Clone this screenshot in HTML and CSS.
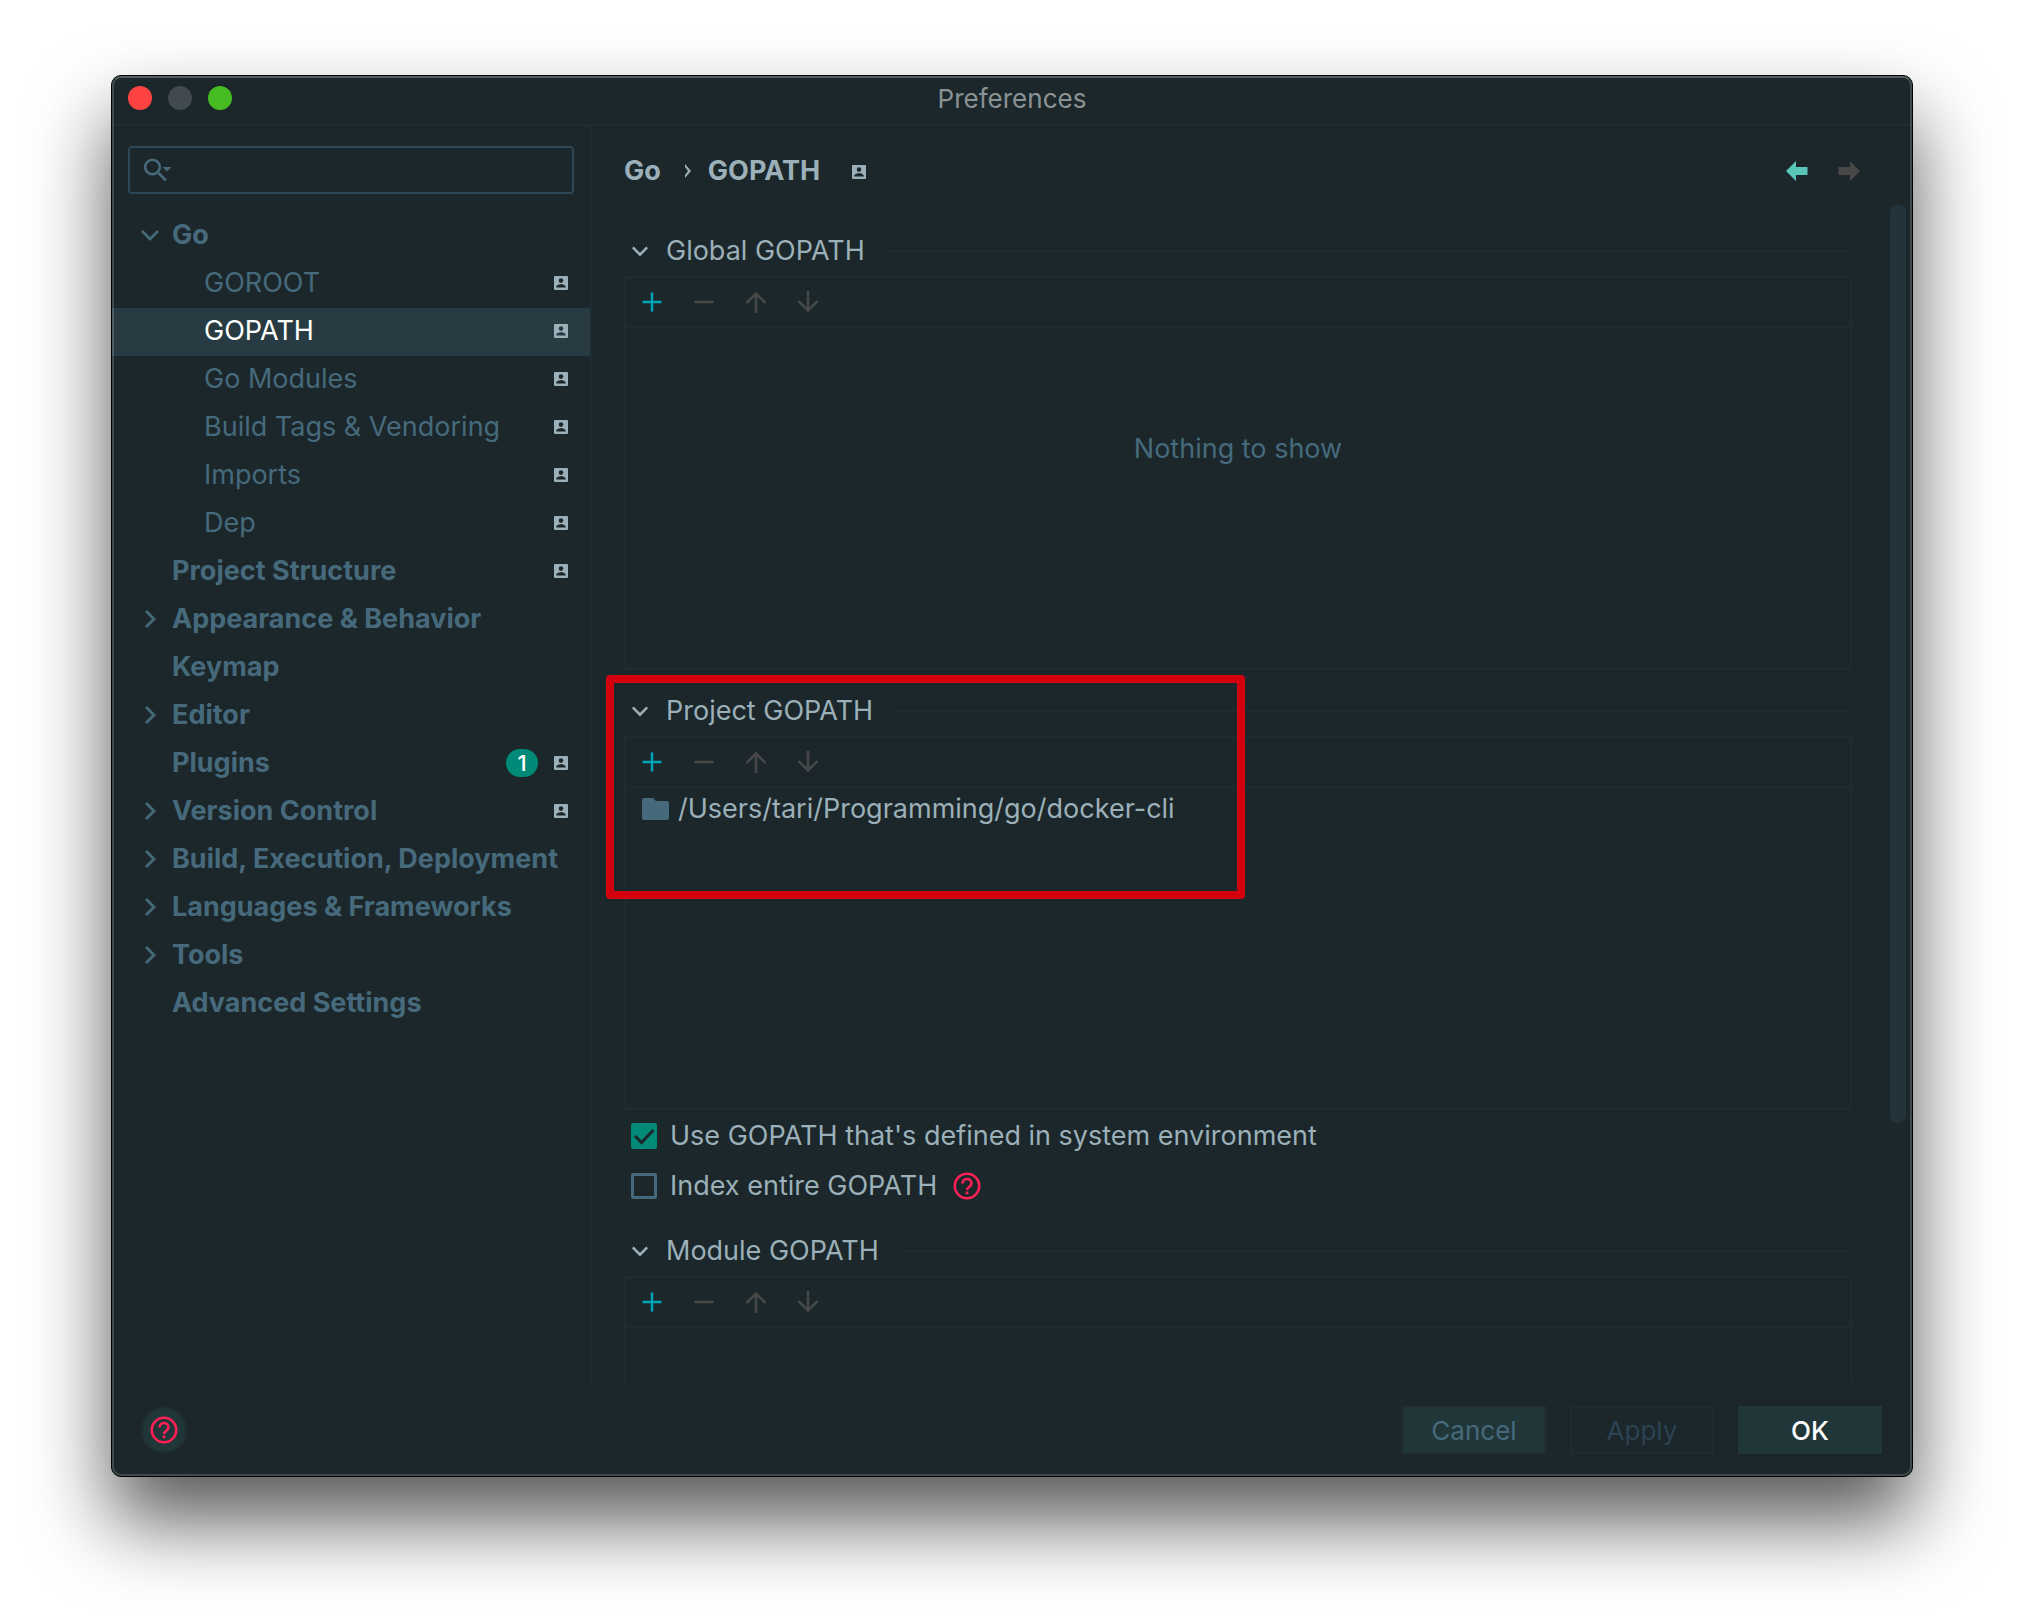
FILE: index.html
```html
<!DOCTYPE html>
<html lang="en">
<head>
<meta charset="utf-8">
<title>Preferences</title>
<link rel="stylesheet" href="styles.css">
</head>
<body>
<svg class="sprite" aria-hidden="true">
  <symbol id="badge" viewBox="0 0 14 14"><path fill="currentColor" fill-rule="evenodd" d="M1 0h12a1 1 0 0 1 1 1v12a1 1 0 0 1-1 1H1a1 1 0 0 1-1-1V1a1 1 0 0 1 1-1zM7 2.300a2.300 2.300 0 1 0 0 4.600a2.300 2.300 0 1 0 0-4.600zM2.300 11.500h9.400v-.8c0-1.700-3-2.500-4.700-2.500s-4.700.8-4.700 2.500z"/></symbol>
  <symbol id="down" viewBox="0 0 20 20"><path d="M2 6l8 8 8-8" fill="none" stroke="currentColor" stroke-width="2.800"/></symbol>
  <symbol id="right" viewBox="0 0 20 20"><path d="M6 2l8 8-8 8" fill="none" stroke="currentColor" stroke-width="2.800"/></symbol>
  <symbol id="add" viewBox="0 0 24 24"><path d="M12 2.500v19M2.500 12h19" fill="none" stroke="currentColor" stroke-width="2.500"/></symbol>
  <symbol id="remove" viewBox="0 0 24 24"><path d="M2.500 12h19" fill="none" stroke="currentColor" stroke-width="2.500"/></symbol>
  <symbol id="up" viewBox="0 0 24 24"><path d="M12 23V4M2.500 13L12 3.500l9.500 9.500" fill="none" stroke="currentColor" stroke-width="2.500"/></symbol>
  <symbol id="dn" viewBox="0 0 24 24"><path d="M12 1v19M2.500 11l9.500 9.500 9.500-9.500" fill="none" stroke="currentColor" stroke-width="2.500"/></symbol>
  <symbol id="help" viewBox="0 0 28 28"><g fill="none" stroke="currentColor"><circle cx="14" cy="14" r="12.200" stroke-width="2.600"/><path d="M9.500 11.500c0-6 9-6 9 0 0 3.300-4.400 3.200-4.400 6.500" stroke-width="2.600"/></g><path d="M12.700 19.500h2.700v2.700h-2.700z" fill="currentColor"/></symbol>
</svg>

<div class="window">
  <header class="titlebar">
    <div class="lights">
      <button class="light light-close" aria-label="Close"></button>
      <button class="light" aria-label="Minimize" disabled></button>
      <button class="light light-zoom" aria-label="Zoom"></button>
    </div>
    <h1 class="title">Preferences</h1>
  </header>

  <div class="body">
    <nav class="sidebar">
      <label class="search">
        <svg class="search-icon" width="28" height="24" viewBox="0 0 28 24" aria-hidden="true"><g fill="none" stroke="currentColor" stroke-width="2.600"><circle cx="8.500" cy="9" r="7.300"/><path d="M14.500 15l7.500 7.500"/></g><path d="M18.500 9h9L23 13.500z" fill="currentColor"/></svg>
        <input class="search-input" type="text" aria-label="Search settings">
      </label>
      <ul class="tree">
        <li class="row group"><svg class="chev"><use href="#down"/></svg><a class="name" href="#">Go</a></li>
        <li class="row child"><a class="name" href="#">GOROOT</a><svg class="badge"><use href="#badge"/></svg></li>
        <li class="row child selected"><a class="name" href="#">GOPATH</a><svg class="badge"><use href="#badge"/></svg></li>
        <li class="row child"><a class="name" href="#">Go Modules</a><svg class="badge"><use href="#badge"/></svg></li>
        <li class="row child"><a class="name" href="#">Build Tags &amp; Vendoring</a><svg class="badge"><use href="#badge"/></svg></li>
        <li class="row child"><a class="name" href="#">Imports</a><svg class="badge"><use href="#badge"/></svg></li>
        <li class="row child"><a class="name" href="#">Dep</a><svg class="badge"><use href="#badge"/></svg></li>
        <li class="row group leaf"><a class="name" href="#">Project Structure</a><svg class="badge"><use href="#badge"/></svg></li>
        <li class="row group"><svg class="chev"><use href="#right"/></svg><a class="name" href="#">Appearance &amp; Behavior</a></li>
        <li class="row group leaf"><a class="name" href="#">Keymap</a></li>
        <li class="row group"><svg class="chev"><use href="#right"/></svg><a class="name" href="#">Editor</a></li>
        <li class="row group leaf"><a class="name" href="#">Plugins</a><span class="count">1</span><svg class="badge"><use href="#badge"/></svg></li>
        <li class="row group"><svg class="chev"><use href="#right"/></svg><a class="name" href="#">Version Control</a><svg class="badge"><use href="#badge"/></svg></li>
        <li class="row group"><svg class="chev"><use href="#right"/></svg><a class="name" href="#">Build, Execution, Deployment</a></li>
        <li class="row group"><svg class="chev"><use href="#right"/></svg><a class="name" href="#">Languages &amp; Frameworks</a></li>
        <li class="row group"><svg class="chev"><use href="#right"/></svg><a class="name" href="#">Tools</a></li>
        <li class="row group leaf"><a class="name" href="#">Advanced Settings</a></li>
      </ul>
    </nav>

    <main class="main">
      <div class="crumbs">
        <a class="crumb" href="#">Go</a>
        <svg class="crumb-sep" width="8" height="14" viewBox="0 0 8 14" aria-hidden="true"><path d="M1 0l6 7-6 7V11l3-4-3-4z" fill="currentColor"/></svg>
        <h2 class="crumb">GOPATH</h2>
        <svg class="crumb-badge"><use href="#badge"/></svg>
        <div class="history">
          <button class="nav nav-back" aria-label="Back"><svg width="22" height="20" viewBox="0 0 22 20"><path d="M0 10L10 0v6h11.500v8H10v6z" fill="currentColor"/></svg></button>
          <button class="nav" aria-label="Forward" disabled><svg width="22" height="20" viewBox="0 0 22 20"><path d="M22 10L12 0v6H.5v8H12v6z" fill="currentColor"/></svg></button>
        </div>
      </div>

      <div class="viewport">
        <div class="content">
          <section class="section">
            <h3 class="heading"><svg class="chev"><use href="#down"/></svg>Global GOPATH</h3>
            <div class="panel panel-tall">
              <div class="toolbar">
                <button class="tool tool-add" aria-label="Add"><svg><use href="#add"/></svg></button>
                <button class="tool" aria-label="Remove" disabled><svg><use href="#remove"/></svg></button>
                <button class="tool" aria-label="Move up" disabled><svg><use href="#up"/></svg></button>
                <button class="tool" aria-label="Move down" disabled><svg><use href="#dn"/></svg></button>
              </div>
              <p class="empty">Nothing to show</p>
            </div>
          </section>

          <section class="section">
            <div class="highlight"></div>
            <h3 class="heading"><svg class="chev"><use href="#down"/></svg>Project GOPATH</h3>
            <div class="panel">
              <div class="toolbar">
                <button class="tool tool-add" aria-label="Add"><svg><use href="#add"/></svg></button>
                <button class="tool" aria-label="Remove" disabled><svg><use href="#remove"/></svg></button>
                <button class="tool" aria-label="Move up" disabled><svg><use href="#up"/></svg></button>
                <button class="tool" aria-label="Move down" disabled><svg><use href="#dn"/></svg></button>
              </div>
              <ul class="paths">
                <li class="path"><svg class="folder" width="28" height="22" viewBox="0 0 28 22" aria-hidden="true"><path d="M2 0h9l3 3h11a2 2 0 0 1 2 2v15a2 2 0 0 1-2 2H2a2 2 0 0 1-2-2V2a2 2 0 0 1 2-2z" fill="currentColor"/></svg>/Users/tari/Programming/go/docker-cli</li>
              </ul>
            </div>
            <div class="options">
              <label class="option"><span class="check"><input class="box" type="checkbox" checked><svg class="tick" width="26" height="26" viewBox="0 0 26 26" aria-hidden="true"><path d="M4 13l6.500 6.500L22.500 7" fill="none" stroke="currentColor" stroke-width="3"/></svg></span>Use GOPATH that's defined in system environment</label>
              <div class="option"><label class="option"><span class="check"><input class="box" type="checkbox"></span>Index entire GOPATH</label><svg class="help"><use href="#help"/></svg></div>
            </div>
          </section>

          <section class="section section-last">
            <h3 class="heading"><svg class="chev"><use href="#down"/></svg>Module GOPATH</h3>
            <div class="panel panel-tall">
              <div class="toolbar">
                <button class="tool tool-add" aria-label="Add"><svg><use href="#add"/></svg></button>
                <button class="tool" aria-label="Remove" disabled><svg><use href="#remove"/></svg></button>
                <button class="tool" aria-label="Move up" disabled><svg><use href="#up"/></svg></button>
                <button class="tool" aria-label="Move down" disabled><svg><use href="#dn"/></svg></button>
              </div>
            </div>
          </section>
        </div>
        <div class="scrollbar"><div class="thumb"></div></div>
      </div>
    </main>
  </div>

  <footer class="footer">
    <button class="help-button" aria-label="Help"><svg class="help"><use href="#help"/></svg></button>
    <div class="actions">
      <button class="button button-cancel">Cancel</button>
      <button class="button" disabled>Apply</button>
      <button class="button button-ok">OK</button>
    </div>
  </footer>
</div>
</body>
</html>
```
FILE: styles.css
```css
:root {
  --bg: #1b272b;
  --line: #1e2c32;
  --text: #9bb0b8;
  --muted: #466a7b;
  --raised: #213639;
  --off: #484848;
  --accent: #008a77;
  --pink: #ff2056;
}

* { box-sizing: border-box; }

body {
  margin: 0;
  height: 100vh;
  padding: 75px 111px 147px;
  display: flex;
  overflow: hidden;
  background: #fff;
  color: var(--text);
  font: 400 27px/32px Inter, "Liberation Sans", sans-serif;
}

h1, h2, h3, p, ul { margin: 0; padding: 0; font: inherit; list-style: none; }
a { color: inherit; text-decoration: none; }
button { margin: 0; padding: 0; border: 0; background: none; color: inherit; font: inherit; }
svg { flex: none; display: block; }
.sprite { position: absolute; width: 0; height: 0; }

/* Window frame */
.window {
  position: relative;
  flex: 1;
  min-width: 0;
  display: flex;
  flex-direction: column;
  border: 1px solid #000;
  border-radius: 10px;
  background: var(--bg);
  box-shadow: 0 44px 80px rgba(0, 0, 0, 0.66);
}
.window::after {
  content: "";
  position: absolute;
  inset: 0;
  border: 2px solid rgba(255, 255, 255, 0.17);
  border-top-color: rgba(255, 255, 255, 0.26);
  border-radius: 9px;
  pointer-events: none;
}

.titlebar {
  display: grid;
  grid-template-columns: 1fr auto 1fr;
  align-items: center;
  height: 50px;
  padding: 0 16px;
  border-bottom: 2px solid var(--line);
}
.lights { display: flex; gap: 16px; padding-bottom: 4px; }
.light { width: 24px; height: 24px; border-radius: 50%; background: #404a50; }
.light-close { background: #ff4343; }
.light-zoom { background: #46bc22; }
.title { padding-bottom: 2px; color: #8b9294; font-size: 26px; }

.body { flex: 1; min-height: 0; display: flex; }

/* Sidebar */
.sidebar {
  flex: none;
  width: 480px;
  padding-top: 20px;
  border-right: 2px solid var(--line);
}
.search {
  display: flex;
  align-items: center;
  gap: 8px;
  height: 48px;
  margin: 0 16px 18px;
  padding: 0 14px;
  border: 2px solid #2e4757;
  border-radius: 4px;
  color: var(--muted);
}
.search-input {
  flex: 1;
  min-width: 0;
  border: 0;
  outline: 0;
  background: none;
  color: var(--text);
  font: inherit;
}
.row {
  display: flex;
  align-items: center;
  height: 48px;
  padding: 0 22px 2px 28px;
  color: var(--muted);
}
.group { font-weight: 700; }
.leaf { padding-left: 60px; }
.child { padding-left: 92px; }
.selected { background: #283b42; color: #fff; }
.name { flex: 1; white-space: nowrap; }
.chev { width: 20px; height: 20px; margin-right: 12px; }
.badge, .crumb-badge { width: 14px; height: 14px; color: var(--text); }
.count {
  width: 32px;
  height: 28px;
  margin-right: 16px;
  border-radius: 14px;
  background: var(--accent);
  color: #fff;
  font-size: 22px;
  font-weight: 500;
  line-height: 28px;
  text-align: center;
}

/* Main column */
.main { flex: 1; min-width: 0; display: flex; flex-direction: column; }
.crumbs {
  display: flex;
  align-items: center;
  height: 78px;
  padding: 12px 52px 0 32px;
  font-weight: 700;
}
.crumb-sep { margin: 0 16px 0 23px; }
.crumb-badge { margin: 2px 0 0 32px; }
.history { display: flex; gap: 30px; margin-left: auto; }
.nav { color: var(--off); }
.nav-back { color: #58c6b8; }

.viewport { flex: 1; min-height: 0; display: flex; padding-right: 6px; overflow: hidden; }
.content { flex: 1; min-width: 0; padding: 31px 38px 0 32px; }
.section { position: relative; margin-bottom: 25px; }
.section-last { margin-top: 33px; }
.heading { display: flex; align-items: center; margin-bottom: 9px; padding-left: 6px; }
.heading .chev { width: 18px; height: 18px; margin: 0 17px 0 1px; }
.heading::after { content: ""; flex: 1; height: 2px; margin-left: 20px; background: var(--line); }
.panel { height: 374px; border: 2px solid var(--line); }
.panel-tall { height: 394px; }
.toolbar { display: flex; height: 50px; border-bottom: 2px solid var(--line); }
.tool { display: grid; place-items: center; width: 52px; color: var(--off); }
.tool svg { width: 24px; height: 24px; }
.tool-add { color: #00a3b8; }
.empty { padding-top: 105px; color: var(--muted); text-align: center; }
.path { display: flex; align-items: center; gap: 8px; padding: 5px 16px; }
.folder { color: var(--muted); }

.highlight {
  position: absolute;
  z-index: 1;
  top: -20px;
  left: -18px;
  width: 639px;
  height: 224px;
  border: 8px solid #d2000f;
  border-radius: 4px;
}

.options { display: grid; gap: 18px; padding: 10px 0 0 7px; }
.option { display: flex; align-items: center; }
.check { display: grid; margin-right: 13px; }
.box, .tick { grid-area: 1 / 1; }
.box {
  appearance: none;
  width: 26px;
  height: 26px;
  margin: 0;
  border: 3px solid var(--muted);
  border-radius: 2px;
}
.box:checked { border-color: var(--accent); background: var(--accent); }
.tick { color: var(--bg); pointer-events: none; }
.help { width: 28px; height: 28px; color: var(--pink); }
.option .help { margin-left: 16px; }

.scrollbar { flex: none; width: 16px; }
.thumb { height: 78%; border-radius: 8px; background: #22333b; }

/* Footer */
.footer {
  display: flex;
  align-items: center;
  justify-content: space-between;
  padding: 24px 30px 22px 29px;
}
.help-button {
  display: grid;
  place-items: center;
  width: 46px;
  height: 46px;
  border: 2px solid #203135;
  border-radius: 50%;
  background: var(--raised);
}
.actions { display: flex; gap: 24px; }
.button {
  width: 144px;
  height: 48px;
  padding-top: 2px;
  border: 2px solid var(--line);
  color: #2b4352;
  font-size: 26px;
}
.button-cancel { border-color: #203135; background: var(--raised); color: var(--muted); }
.button-ok { border-color: var(--raised); background: var(--raised); color: #fff; font-weight: 500; }
```
